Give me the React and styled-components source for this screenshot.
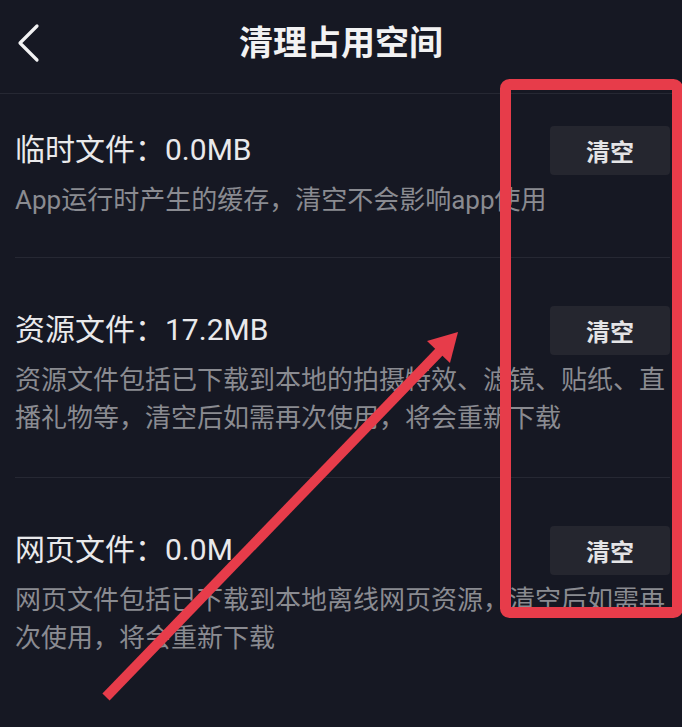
import React from 'react';
import styled, { createGlobalStyle } from 'styled-components';

const GlobalStyle = createGlobalStyle`
  html, body {
    margin: 0;
    padding: 0;
    background: #161823;
  }
  body {
    font-family: Roboto, "Noto Sans CJK SC", "Noto Sans", sans-serif;
  }
`;

const Page = styled.div`
  position: relative;
  width: 682px;
  height: 727px;
  overflow: hidden;
  background: #161823;
  color: #fff;
`;

const Header = styled.header`
  position: relative;
  display: flex;
  align-items: center;
  justify-content: center;
  height: 86px;
  padding-bottom: 7px;
  border-bottom: 1px solid #262833;
`;

const BackButton = styled.button`
  position: absolute;
  left: 12px;
  top: 22px;
  width: 32px;
  height: 42px;
  padding: 0;
  border: 0;
  background: none;
  display: flex;
  align-items: center;
  justify-content: center;
  cursor: pointer;
`;

const Title = styled.h1`
  margin: 0;
  font-size: 34px;
  line-height: 44px;
  font-weight: 700;
  color: #f2f2f3;
  letter-spacing: 0;
`;

const List = styled.ul`
  list-style: none;
  margin: 0;
  padding: 0;
`;

const Row = styled.li`
  margin: 0 12px 0 15px;
  padding: ${(p) => (p.$first ? '36px 0 38px' : '52px 0 40px')};
  border-bottom: 1px solid #262833;

  &:last-child {
    border-bottom: 0;
  }
`;

const RowHead = styled.div`
  display: flex;
  align-items: center;
  justify-content: space-between;
  height: 40px;
`;

const RowTitle = styled.h2`
  margin: 0;
  font-size: 30px;
  line-height: 40px;
  font-weight: 400;
  color: #e9e9eb;
`;

const ClearButton = styled.button`
  width: 120px;
  height: 49px;
  border: 0;
  border-radius: 4px;
  background: #25262f;
  color: #e4e4e6;
  font-family: inherit;
  font-size: 24px;
  font-weight: 700;
  cursor: pointer;
`;

const Desc = styled.p`
  margin: 11px 0 0;
  font-size: 26px;
  line-height: 38px;
  color: #8a8b91;
`;

const Overlay = styled.svg`
  position: absolute;
  left: 0;
  top: 0;
  pointer-events: none;
`;

const items = [
  {
    name: '临时文件',
    size: '0.0MB',
    desc: 'App运行时产生的缓存，清空不会影响app使用',
  },
  {
    name: '资源文件',
    size: '17.2MB',
    desc: '资源文件包括已下载到本地的拍摄特效、滤镜、贴纸、直播礼物等，清空后如需再次使用，将会重新下载',
  },
  {
    name: '网页文件',
    size: '0.0M',
    desc: '网页文件包括已下载到本地离线网页资源，清空后如需再次使用，将会重新下载',
  },
];

export default function App() {
  return (
    <Page>
      <GlobalStyle />
      <Header>
        <BackButton aria-label='返回'>
          <svg width='24' height='40' viewBox='0 0 24 40'>
            <path
              d='M21 3 L4 20 L21 37'
              fill='none'
              stroke='#f2f2f3'
              strokeWidth='3.2'
              strokeLinecap='round'
              strokeLinejoin='round'
            />
          </svg>
        </BackButton>
        <Title>清理占用空间</Title>
      </Header>
      <List>
        {items.map((item, index) => (
          <Row key={item.name} $first={index === 0}>
            <RowHead>
              <RowTitle>
                {item.name}：{item.size}
              </RowTitle>
              <ClearButton>清空</ClearButton>
            </RowHead>
            <Desc>{item.desc}</Desc>
          </Row>
        ))}
      </List>

      {/* red annotation marks drawn over the screen */}
      <Overlay width='682' height='727' viewBox='0 0 682 727'>
        <rect
          x='505.5'
          y='84.5'
          width='172'
          height='528'
          rx='4'
          fill='none'
          stroke='#e73c4a'
          strokeWidth='11'
        />
        <line
          x1='106'
          y1='697'
          x2='441'
          y2='350'
          stroke='#e73c4a'
          strokeWidth='10'
        />
        <polygon points='458,332 427,341 450,363' fill='#e73c4a' />
      </Overlay>
    </Page>
  );
}
